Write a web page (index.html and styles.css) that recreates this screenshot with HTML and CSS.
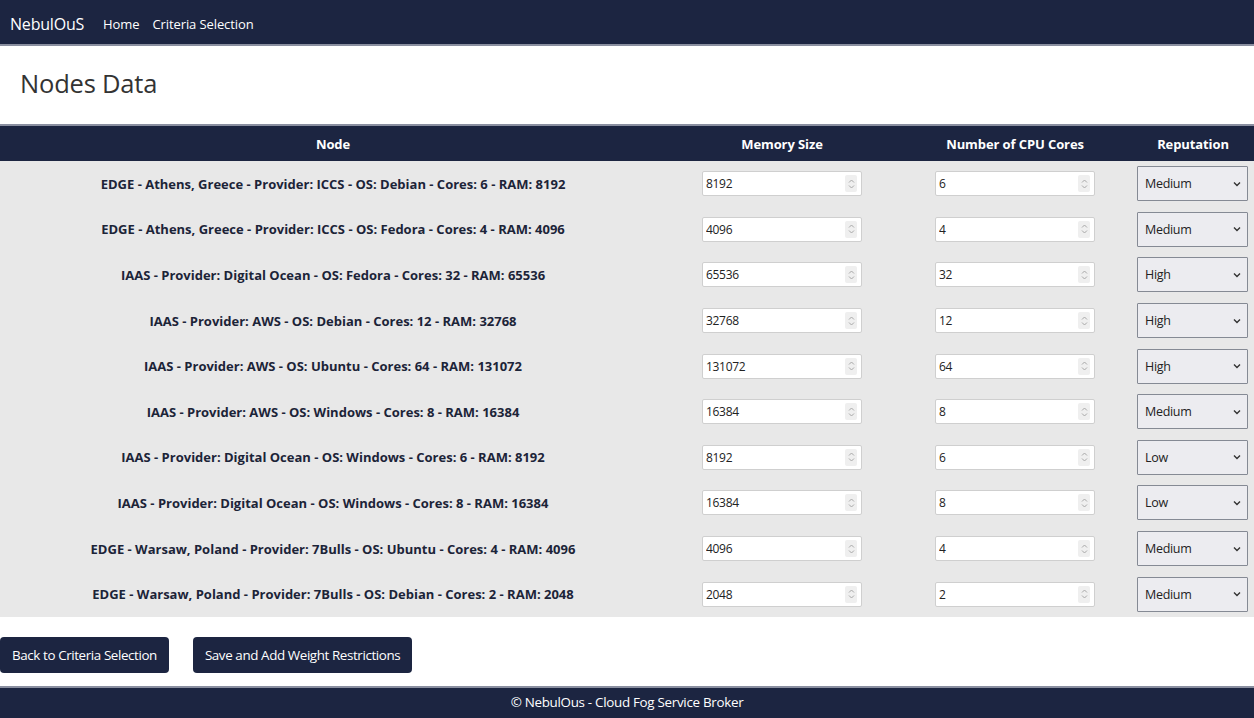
FILE: index.html
```html
<!DOCTYPE html>
<html lang="en">
<head>
<meta charset="utf-8">
<title>Nodes Data</title>
<link rel="stylesheet" href="styles.css">
</head>
<body>
<nav class="navbar">
  <span class="brand">NebulOuS</span>
  <a class="nav-link" href="#">Home</a>
  <a class="nav-link" href="#">Criteria Selection</a>
</nav>
<main>
  <h1 class="title">Nodes Data</h1>
  <table class="nodes">
    <colgroup>
      <col class="c-node"><col class="c-mem"><col class="c-cpu"><col class="c-rep">
    </colgroup>
    <thead>
      <tr><th>Node</th><th>Memory Size</th><th>Number of CPU Cores</th><th>Reputation</th></tr>
    </thead>
    <tbody id="rows"></tbody>
  </table>
  <div class="actions">
    <button class="btn">Back to Criteria Selection</button>
    <button class="btn">Save and Add Weight Restrictions</button>
  </div>
</main>
<footer class="footer">© NebulOus - Cloud Fog Service Broker</footer>
<script src="app.js"></script>
</body>
</html>
```

FILE: app.js
```js
const data = [
  ["EDGE - Athens, Greece - Provider: ICCS - OS: Debian - Cores: 6 - RAM: 8192", 8192, 6, "Medium"],
  ["EDGE - Athens, Greece - Provider: ICCS - OS: Fedora - Cores: 4 - RAM: 4096", 4096, 4, "Medium"],
  ["IAAS - Provider: Digital Ocean - OS: Fedora - Cores: 32 - RAM: 65536", 65536, 32, "High"],
  ["IAAS - Provider: AWS - OS: Debian - Cores: 12 - RAM: 32768", 32768, 12, "High"],
  ["IAAS - Provider: AWS - OS: Ubuntu - Cores: 64 - RAM: 131072", 131072, 64, "High"],
  ["IAAS - Provider: AWS - OS: Windows - Cores: 8 - RAM: 16384", 16384, 8, "Medium"],
  ["IAAS - Provider: Digital Ocean - OS: Windows - Cores: 6 - RAM: 8192", 8192, 6, "Low"],
  ["IAAS - Provider: Digital Ocean - OS: Windows - Cores: 8 - RAM: 16384", 16384, 8, "Low"],
  ["EDGE - Warsaw, Poland - Provider: 7Bulls - OS: Ubuntu - Cores: 4 - RAM: 4096", 4096, 4, "Medium"],
  ["EDGE - Warsaw, Poland - Provider: 7Bulls - OS: Debian - Cores: 2 - RAM: 2048", 2048, 2, "Medium"]
];
const spin = '<span class="spin"><svg width="9" height="14" viewBox="0 0 9 14"><path d="M2 5.5 L4.5 3 L7 5.5" fill="none" stroke="#a8a8a8" stroke-width="1"/><path d="M2 8.5 L4.5 11 L7 8.5" fill="none" stroke="#a8a8a8" stroke-width="1"/></svg></span>';
const tbody = document.getElementById("rows");
data.forEach(([name, mem, cpu, rep]) => {
  const opts = ["High", "Medium", "Low"].map(o => `<option${o === rep ? " selected" : ""}>${o}</option>`).join("");
  const tr = document.createElement("tr");
  tr.innerHTML = `<td class="name">${name}</td>
    <td><div class="num"><input type="text" value="${mem}">${spin}</div></td>
    <td><div class="num"><input type="text" value="${cpu}">${spin}</div></td>
    <td><select class="sel">${opts}</select></td>`;
  tbody.appendChild(tr);
});
```

FILE: styles.css
```css
* { box-sizing: border-box; }
html, body { margin: 0; padding: 0; }
body {
  font-family: "Open Sans", "Noto Sans", sans-serif;
  color: #212529;
  background: #fff;
  width: 1254px;
  height: 718px;
  overflow: hidden;
}
.navbar {
  height: 46px;
  background: #1c2541;
  border-bottom: 2px solid #8a8fa0;
  display: flex;
  align-items: center;
  padding: 3px 10px 0;
}
.brand {
  color: #fff;
  font-size: 16px;
  letter-spacing: -0.2px;
  margin-right: 19px;
}
.nav-link {
  color: #fff;
  font-size: 13px;
  text-decoration: none;
  margin-right: 13px;
  letter-spacing: -0.1px;
}
.title {
  margin: 0;
  height: 78px;
  padding: 20px 0 0 20px;
  font-size: 25.5px;
  font-weight: 400;
  color: #333;
  letter-spacing: -0.2px;
}
.nodes {
  width: 1254px;
  border-collapse: collapse;
  table-layout: fixed;
}
.c-node { width: 666px; }
.c-mem { width: 232px; }
.c-cpu { width: 234px; }
.c-rep { width: 122px; }
.nodes thead tr {
  background: #1c2541;
  height: 36px;
  border-top: 2px solid #8a8fa0;
}
.nodes th {
  color: #fff;
  font-size: 13px;
  font-weight: 700;
  text-align: center;
  padding: 0;
  letter-spacing: -0.1px;
}
.nodes tbody tr {
  background: #e8e8e8;
  height: 45.6px;
}
.nodes td { padding: 0; text-align: center; vertical-align: middle; }
.nodes td.name {
  font-size: 13px;
  font-weight: 700;
  color: #1c2438;
  letter-spacing: 0;
}
.num {
  display: flex;
  align-items: center;
  width: 160px;
  height: 25px;
  margin: 0 auto;
  background: #fff;
  border: 1px solid #cfcfcf;
  border-radius: 2px;
}
.num input {
  flex: 1;
  min-width: 0;
  border: none;
  outline: none;
  background: transparent;
  font-family: "Open Sans", "Noto Sans", sans-serif;
  font-size: 12px;
  color: #222;
  padding: 0 0 0 3px;
  letter-spacing: -0.3px;
}
.spin {
  display: flex;
  align-items: center;
  justify-content: center;
  width: 12px;
  height: 17px;
  margin-right: 4px;
  background: #efefef;
  border-radius: 2px;
}
.sel {
  appearance: none;
  -webkit-appearance: none;
  display: block;
  width: 111px;
  height: 35px;
  margin: 0 0 0 5px;
  border: 1.5px solid #858a94;
  border-radius: 1px;
  background: #ececf0 url("data:image/svg+xml;utf8,<svg xmlns='http://www.w3.org/2000/svg' width='8' height='6' viewBox='0 0 8 6'><path d='M1 1.5 L4 4.5 L7 1.5' fill='none' stroke='%23333' stroke-width='1.4'/></svg>") no-repeat right 6px center;
  font-family: "Open Sans", "Noto Sans", sans-serif;
  font-size: 12.5px;
  color: #222;
  padding: 0 0 0 7px;
  letter-spacing: -0.3px;
}
.actions {
  display: flex;
  gap: 24px;
  padding: 20px 0 0 0;
  height: 69px;
}
.btn {
  height: 36px;
  background: #1c2541;
  color: #fff;
  border: none;
  border-radius: 4px;
  font-family: "Open Sans", "Noto Sans", sans-serif;
  font-size: 13.4px;
  letter-spacing: -0.4px;
  padding: 0 12px;
  cursor: pointer;
}
.footer {
  height: 34px;
  background: #1c2541;
  border-top: 2px solid #8a8fa0;
  padding-bottom: 4px;
  color: #fff;
  font-size: 13.4px;
  letter-spacing: -0.3px;
  display: flex;
  align-items: center;
  justify-content: center;
}
```
